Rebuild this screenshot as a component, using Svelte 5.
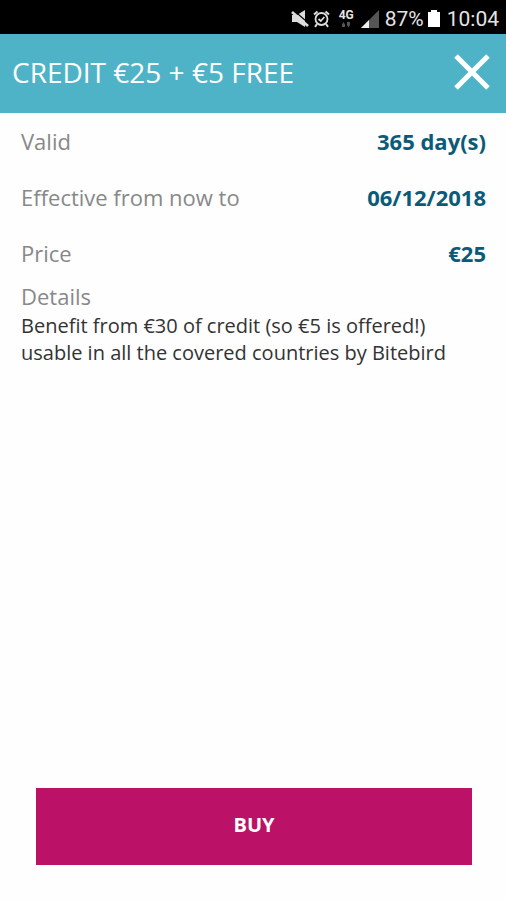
<script lang="ts">
  type Row = { label: string; value: string };

  export let title = 'CREDIT €25 + €5 FREE';
  export let rows: Row[] = [
    { label: 'Valid', value: '365 day(s)' },
    { label: 'Effective from now to', value: '06/12/2018' },
    { label: 'Price', value: '€25' },
  ];
  export let details =
    'Benefit from €30 of credit (so €5 is offered!) usable in all the covered countries by Bitebird';
</script>

<div class="screen">
  <div class="status-bar">
    <svg class="muted" width="18" height="18" viewBox="0 0 18 18" aria-hidden="true">
      <path d="M1 5h5l8-5v17l-8-5H1z" fill="#ddd" />
      <path d="M4 1.5l14 12" stroke="#000" stroke-width="1.2" />
      <path d="M1 2l16 14" stroke="#ddd" stroke-width="2.6" />
    </svg>
    <svg class="alarm" width="17" height="18" viewBox="0 0 17 18" fill="none" stroke="#ddd" aria-hidden="true">
      <circle cx="8.5" cy="9" r="6" stroke-width="1.8" />
      <path d="M5.5 9l2.3 2 3.5-4" stroke-width="1.7" />
      <path d="M1 4.5l3.5-3M16 4.5l-3.5-3M4 14l-2 2.8M13 14l2 2.8" stroke-width="2" />
    </svg>
    <div class="network">
      <span>4G</span>
      <svg width="10" height="6" viewBox="0 0 10 6" fill="#555" aria-hidden="true">
        <path d="M1 2.5L2.5 0 4 2.5V5H1zM6 0h3v3L7.5 5.5 6 3z" />
      </svg>
    </div>
    <svg class="signal" width="18" height="18" viewBox="0 0 18 18" aria-hidden="true">
      <path d="M0 18L18 0v18z" fill="#555" />
      <path d="M0 18l8-8v8z" fill="#eee" />
    </svg>
    <span>87%</span>
    <svg class="battery" width="12" height="17" viewBox="0 0 12 17" fill="#fff" aria-hidden="true">
      <path d="M3 0h6v2h3v15H0V2h3z" />
    </svg>
    <span>10:04</span>
  </div>

  <header>
    <h1>{title}</h1>
    <button class="close-button" aria-label="Close">
      <svg width="36" height="36" viewBox="0 0 36 36" aria-hidden="true">
        <path d="M2 2l32 32M34 2L2 34" stroke="#fff" stroke-width="5" />
      </svg>
    </button>
  </header>

  <main>
    <dl>
      {#each rows as row}
        <div class="row">
          <dt>{row.label}</dt>
          <dd>{row.value}</dd>
        </div>
      {/each}
    </dl>
    <h2>Details</h2>
    <p>{details}</p>
  </main>

  <footer>
    <button class="buy-button">BUY</button>
  </footer>
</div>

<style>
  :global(body) {
    background-color: #fefefe;
  }

  .screen {
    display: flex;
    flex-direction: column;
    min-height: 100vh;
    font-family: 'Open Sans', 'Noto Sans', sans-serif;
  }

  .status-bar {
    display: flex;
    align-items: center;
    justify-content: flex-end;
    height: 34px;
    padding: 3px 7px 0 0;
    box-sizing: border-box;
    background-color: #000;
    color: #e4e4e4;
    font-family: Roboto, sans-serif;
    font-size: 21px;
    line-height: 32px;
  }

  .alarm {
    margin-left: 4px;
  }

  .network {
    display: flex;
    flex-direction: column;
    align-items: center;
    gap: 2px;
    margin: 0 7px 0 9px;
    font-size: 12px;
    font-weight: bold;
    line-height: 10px;
  }

  .signal {
    margin-right: 6px;
  }

  .battery {
    margin: 0 7px 0 4px;
  }

  header {
    display: flex;
    align-items: center;
    justify-content: space-between;
    min-height: 79px;
    padding: 0 16px 3px 12px;
    box-sizing: border-box;
    background-color: #4fb3c8;
  }

  h1 {
    margin: 0;
    color: white;
    font-size: 28px;
    font-weight: normal;
    line-height: 36px;
  }

  button {
    border: none;
    cursor: pointer;
  }

  .close-button {
    display: flex;
    padding: 0;
    background: none;
  }

  main {
    flex: 1;
    padding: 0 20px 0 21px;
  }

  dl {
    margin: 0;
  }

  .row {
    display: flex;
    align-items: center;
    justify-content: space-between;
    height: 56px;
    font-size: 22px;
  }

  dt,
  h2 {
    color: #888;
  }

  dd {
    margin: 0;
    color: #0b5a78;
    font-weight: bold;
  }

  h2 {
    margin: 0;
    font-size: 22px;
    font-weight: normal;
    line-height: 31px;
  }

  p {
    max-width: 440px;
    margin: 0;
    color: #333;
    font-size: 20px;
    line-height: 27px;
  }

  footer {
    padding: 0 34px 35px 36px;
  }

  .buy-button {
    width: 100%;
    height: 77px;
    padding: 0 0 4px;
    background-color: #bb1166;
    color: white;
    font-family: inherit;
    font-size: 20px;
    font-weight: bold;
  }
</style>
